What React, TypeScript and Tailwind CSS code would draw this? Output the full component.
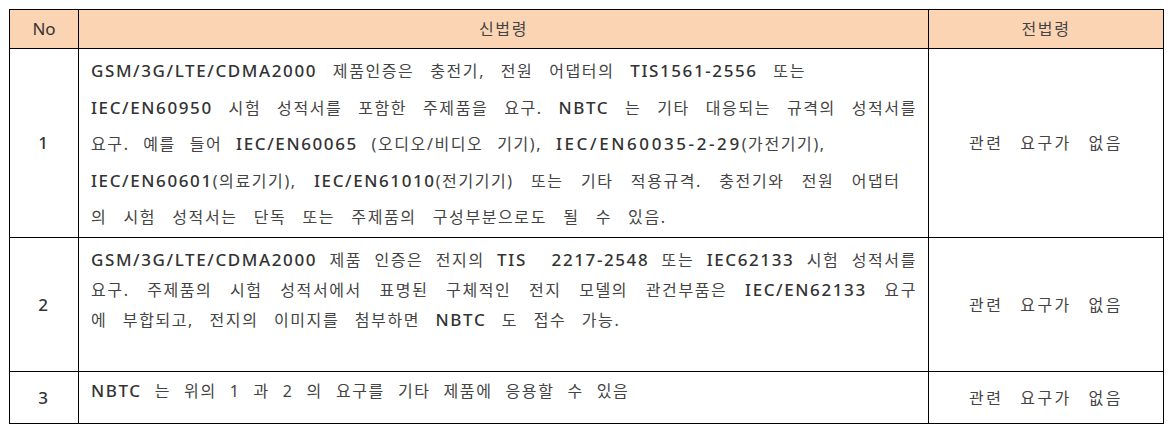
import type { ReactNode } from 'react';

// Latin runs are wider and heavier than the Korean ones in the original
function L({ children, wide }: { children: ReactNode; wide?: boolean }) {
  return (
    <span className={`text-[17px] font-medium text-[#333] ${wide ? 'tracking-[2.6px]' : 'tracking-[1.6px]'}`}>
      {children}
    </span>
  );
}

const cell = 'border border-black';
const full = 'text-justify [text-align-last:justify]';

export default function App() {
  return (
    <div
      className="bg-white w-[1171px] h-[434px] pt-[9px] pl-[9px]"
      style={{ fontFamily: '"Noto Sans", "Noto Sans CJK KR", sans-serif' }}
    >
      <table className="border-collapse table-fixed w-[1154px] text-[#444] text-[16px] tracking-[1.6px]">
        <colgroup>
          <col className="w-[69px]" />
          <col className="w-[850px]" />
          <col className="w-[235px]" />
        </colgroup>
        <thead>
          <tr className="h-[39px] bg-[#fbd4b4]">
            <th className={`${cell} font-normal text-center text-[17px] tracking-normal text-[#333]`}>No</th>
            <th className={`${cell} font-normal text-center`}>신법령</th>
            <th className={`${cell} font-normal text-center`}>전법령</th>
          </tr>
        </thead>
        <tbody>
          <tr className="h-[189px]">
            <td className={`${cell} text-center`}><L>1</L></td>
            <td className={`${cell} align-top pl-[12px] pr-[11px] pt-[4px] leading-[36.5px]`}>
              <div className="whitespace-nowrap [word-spacing:10px]"><L>GSM/3G/LTE/CDMA2000</L> 제품인증은 충전기, 전원 어댑터의 <L>TIS1561-2556</L> 또는</div>
              <div className={full}><L>IEC/EN60950</L> 시험 성적서를 포함한 주제품을 요구. <L>NBTC</L> 는 기타 대응되는 규격의 성적서를</div>
              <div className="whitespace-nowrap [word-spacing:8px]">
                요구. 예를 들어 <L>IEC/EN60065</L> (오디오/비디오 기기), <L wide>IEC/EN60035-2-29</L>(가전기기),
              </div>
              <div className="whitespace-nowrap [word-spacing:11.5px]"><L>IEC/EN60601</L>(의료기기), <L>IEC/EN61010</L>(전기기기) 또는 기타 적용규격. 충전기와 전원 어댑터</div>
              <div className="whitespace-nowrap [word-spacing:10.4px]">의 시험 성적서는 단독 또는 주제품의 구성부분으로도 될 수 있음.</div>
            </td>
            <td className={`${cell} text-center tracking-[2.5px] [word-spacing:10px]`}>관련 요구가 없음</td>
          </tr>
          <tr className="h-[134px]">
            <td className={`${cell} text-center`}><L>2</L></td>
            <td className={`${cell} align-top pl-[12px] pr-[11px] pt-[7px] leading-[30px]`}>
              <div className={full}><L>GSM/3G/LTE/CDMA2000</L> 제품 인증은 전지의 <L>TIS</L> &nbsp;<L>2217-2548</L> 또는 <L>IEC62133</L> 시험 성적서를</div>
              <div className={full}>요구. 주제품의 시험 성적서에서 표명된 구체적인 전지 모델의 관건부품은 <L>IEC/EN62133</L> 요구</div>
              <div className="whitespace-nowrap [word-spacing:9.75px]">에 부합되고, 전지의 이미지를 첨부하면 <L>NBTC</L> 도 접수 가능.</div>
            </td>
            <td className={`${cell} text-center tracking-[2.5px] [word-spacing:10px]`}>관련 요구가 없음</td>
          </tr>
          <tr className="h-[52px]">
            <td className={`${cell} text-center`}><L>3</L></td>
            <td className={`${cell} align-top pl-[12px] pr-[11px] pt-[4px] leading-[30px]`}>
              <div className="whitespace-nowrap [word-spacing:7.25px]"><L>NBTC</L> 는 위의 1 과 2 의 요구를 기타 제품에 응용할 수 있음</div>
            </td>
            <td className={`${cell} text-center tracking-[2.5px] [word-spacing:10px]`}>관련 요구가 없음</td>
          </tr>
        </tbody>
      </table>
    </div>
  );
}
